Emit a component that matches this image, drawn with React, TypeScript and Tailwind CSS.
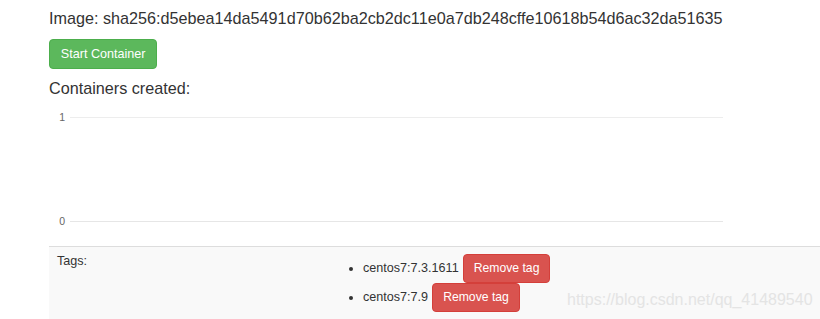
const tags = ["centos7:7.3.1611", "centos7:7.9"];

function Chart() {
  return (
    <svg width="700" height="148" className="block" aria-hidden="true">
      <line x1="21" y1="19.5" x2="674" y2="19.5" stroke="#ededed" strokeWidth="1" />
      <line x1="21" y1="123.5" x2="674" y2="123.5" stroke="#e6e6e6" strokeWidth="1" />
      <text x="16" y="22.5" textAnchor="end" fontSize="10.5" fill="#666" fontFamily="'Liberation Sans', Arial, sans-serif">
        1
      </text>
      <text x="16" y="126.5" textAnchor="end" fontSize="10.5" fill="#666" fontFamily="'Liberation Sans', Arial, sans-serif">
        0
      </text>
    </svg>
  );
}

export default function App() {
  return (
    <div className="relative h-[319px] w-[820px] overflow-hidden bg-white pl-[49px] font-['Liberation_Sans',Arial,sans-serif] text-[#333]">
      <p className="mt-[8px] text-[16.2px] leading-[20px]">
        Image: sha256:d5ebea14da5491d70b62ba2cb2dc11e0a7db248cffe10618b54d6ac32da51635
      </p>

      <button className="mt-[11px] h-[30px] rounded-[4px] border border-[#4cae4c] bg-[#5cb85c] px-[10.8px] text-[12.6px] leading-none text-white">
        Start Container
      </button>

      <p className="mt-[9px] text-[16.2px] leading-[20px]">Containers created:</p>

      <Chart />

      <div className="flex h-[80px] border-t border-[#ddd] bg-[#f9f9f9]">
        <div className="w-[290px] pl-[8px] pt-[5px] text-[12.6px] leading-[18px]">Tags:</div>
        <ul className="flex flex-col pt-[7px] text-[12.6px]">
          {tags.map((t) => (
            <li key={t} className="flex h-[29px] items-center">
              <span className="ml-[10px] mr-[10px] h-[4px] w-[4px] rounded-full bg-[#333]" />
              <span>{t}</span>
              <button className="ml-[4px] h-[29px] rounded-[4px] border border-[#d43f3a] bg-[#d9534f] px-[10px] text-[12.2px] leading-none text-white">
                Remove tag
              </button>
            </li>
          ))}
        </ul>
      </div>

      <span className="absolute left-[567px] top-[290px] text-[16px] leading-[20px] text-[#e4e4e4]">
        https://blog.csdn.net/qq_41489540
      </span>
    </div>
  );
}
